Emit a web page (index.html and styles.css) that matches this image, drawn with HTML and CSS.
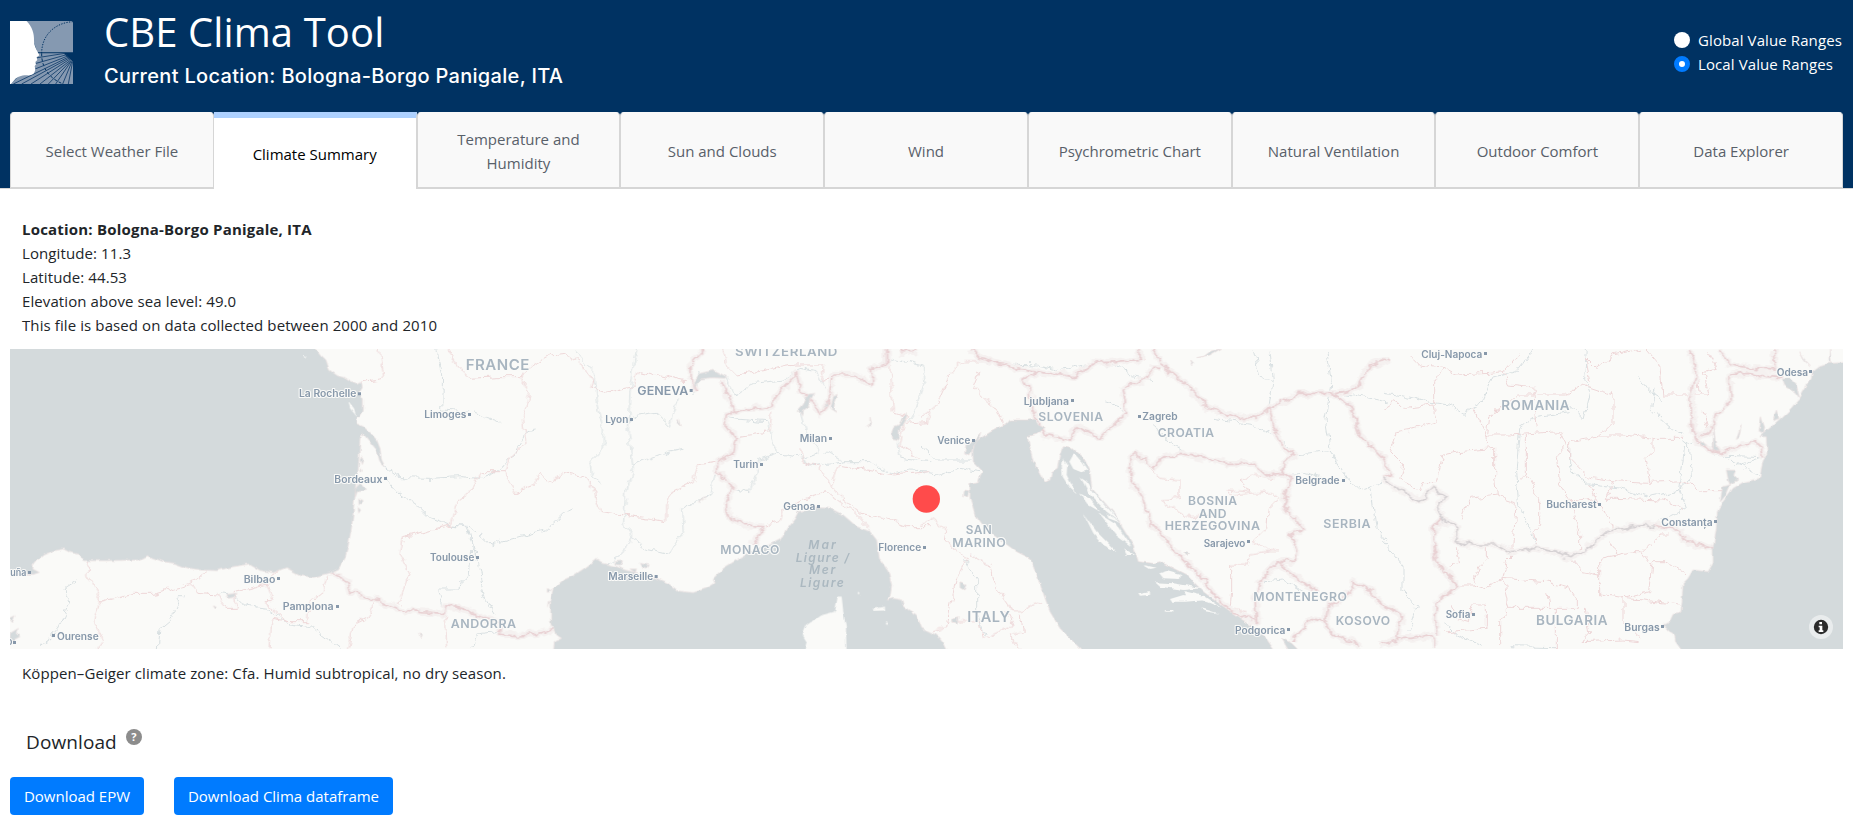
FILE: index.html
```html
<!DOCTYPE html>
<html lang="en">
<head>
<meta charset="utf-8">
<title>CBE Clima Tool</title>
<link rel="stylesheet" href="styles.css">
</head>
<body>
<header class="header">
  <div class="banner">
    <svg class="logo" viewBox="30 33 189 189">
      <path d="M80 33H219V127H112Z" fill="#8599b1"/>
      <path d="M110 130H190L219 155V222H32L60 195Z" fill="#8599b1"/>
      <path d="M219 35C165 38 125 75 125 130" class="logo-dots"/>
      <path d="M125 130C124 175 150 205 185 220" class="logo-dashes"/>
      <path d="M100 145L195 130M98 163L200 134M90 183L203 138M40 222L206 141M65 222L208 144M93 222L210 147M120 222L212 150M145 222L213 152M167 222L214 153M188 222L216 154M205 222L218 154" class="logo-rays"/>
      <path d="M30 33H80C96 50 103 70 102 92C102 110 114 125 118 136L110 142L112 150L106 156L108 163L104 169L106 178C104 193 96 197 80 196C62 196 52 202 46 207L33 222H30Z" fill="#fff"/>
    </svg>
    <div class="titles">
      <h1 class="title">CBE Clima Tool</h1>
      <h5 class="subtitle">Current Location: Bologna-Borgo Panigale, ITA</h5>
    </div>
    <div class="ranges">
      <label class="range"><span class="radio"></span><span>Global Value Ranges</span></label>
      <label class="range"><span class="radio radio-on"></span><span>Local Value Ranges</span></label>
    </div>
  </div>
  <nav class="tabs">
    <a class="tab">Select Weather File</a>
    <a class="tab tab-active">Climate Summary</a>
    <a class="tab">Temperature and Humidity</a>
    <a class="tab">Sun and Clouds</a>
    <a class="tab">Wind</a>
    <a class="tab">Psychrometric Chart</a>
    <a class="tab">Natural Ventilation</a>
    <a class="tab">Outdoor Comfort</a>
    <a class="tab">Data Explorer</a>
  </nav>
</header>
<main class="content">
  <div class="info">
    <b class="info-title">Location: Bologna-Borgo Panigale, ITA</b>
    <span>Longitude: 11.3</span>
    <span>Latitude: 44.53</span>
    <span>Elevation above sea level: 49.0</span>
    <span>This file is based on data collected between 2000 and 2010</span>
  </div>
  <svg class="map" viewBox="30 12 5499 900">
    <defs>
      <filter id="rough" filterUnits="userSpaceOnUse" x="0" y="0" width="5560" height="930">
        <feTurbulence type="fractalNoise" baseFrequency="0.035" numOctaves="3" seed="4" result="n"/>
        <feDisplacementMap in="SourceGraphic" in2="n" scale="26" xChannelSelector="R" yChannelSelector="G"/>
      </filter>
      <filter id="coast" filterUnits="userSpaceOnUse" x="0" y="0" width="5560" height="930">
        <feTurbulence type="fractalNoise" baseFrequency="0.04" numOctaves="2" seed="9" result="n"/>
        <feDisplacementMap in="SourceGraphic" in2="n" scale="12" xChannelSelector="R" yChannelSelector="G"/>
      </filter>
      <g id="borders">
        <path d="M990 683L1040 705L1050 740L1140 770L1200 795L1330 805L1335 785L1400 795L1450 820L1500 830L1500 865L1560 870L1620 865L1665 850"/>
        <path d="M2115 12L2070 60L2070 100L2085 130L2095 135M2165 110L2180 150L2205 200L2180 210L2175 240L2210 280L2200 330L2150 350L2150 380L2200 430L2180 470L2190 520L2240 540L2290 545L2260 600M2200 200L2260 190L2310 185L2340 140L2390 85L2400 140L2440 170L2460 210L2490 160L2500 90L2560 90L2615 120L2615 70L2660 60L2660 12M2700 20L2740 20L2750 12"/>
        <path d="M2915 12L2940 40L2990 55L3110 80L3220 95L3280 55L3350 50L3420 40L3420 12M3110 80L3070 105L3090 140L3100 200L3130 270L3210 285L3230 245L3300 280L3340 240L3380 210L3370 130L3440 100L3460 70L3480 70M3460 12L3480 55L3530 95L3590 150L3620 185L3700 215L3770 220L3810 190L3900 145L4010 145L4070 130L4110 60L4170 45M3810 190L3820 240L3850 310L3890 330L3850 350L3845 385L3875 395L3850 480L3910 555L3870 570L3895 620L3890 645L3835 650L3780 710L3765 760L3770 830L3700 800L3650 760L3590 680L3550 640L3500 590L3450 530L3430 460L3390 400L3390 340L3410 325L3460 370L3480 340L3540 325L3620 340L3680 355L3760 355L3800 390L3845 385M4000 145L4050 180L4080 270L4150 340L4170 390L4150 400M3835 650L3880 690L3950 740M3880 890L3930 820L3975 830L3980 790L4050 740L4060 710L4110 740L4150 780L4205 810L4190 880L4240 880L4290 870L4310 905M3975 830L4000 870L4060 890L4080 912M4190 885L4140 900"/>
        <path d="M5069 12L5090 80L5075 150L5080 260L5090 290L5160 325L5220 300L5270 290L5285 310L5290 340M5095 275L5130 260L5150 210L5190 170L5190 90L5240 85L5310 95L5350 100M5160 20L5190 60L5260 70L5325 75L5320 12M4960 540L5040 555L5060 590L5140 610M4330 520L4300 550L4310 650L4370 720L4310 775L4305 830L4310 870"/>
      </g>
      <path id="danube" d="M4150 400L4200 435L4260 470L4300 430L4340 455L4310 480L4335 530L4380 550L4360 590L4420 600L4490 600L4540 620L4600 610L4660 620L4710 635L4760 615L4820 560L4900 545L4960 540"/>
    </defs>
    <rect x="0" y="0" width="5560" height="930" class="land"/>

    <g class="rivers" filter="url(#rough)">
      <path d="M1310 12L1328 90L1325 195L1400 200M1155 365L1200 398L1290 400L1380 395L1440 400L1490 380L1540 330L1580 260L1610 255M1155 400L1200 450L1250 480L1285 515L1350 540L1395 545L1420 600L1410 690L1360 735L1315 735L1330 790M1350 540L1410 545L1470 600L1560 575L1640 555L1690 505L1725 495M1400 545L1430 640L1455 760L1485 810M120 905L165 870L210 770L195 730L235 705M475 910L480 850L510 825L540 755L560 755M650 745L700 750L730 780L800 790L870 840L940 850L1020 910M1415 910L1430 870L1510 860"/>
      <g transform="translate(1380)">
        <path d="M345 20L400 80L410 180L430 250L430 310L390 350L395 390L425 410M530 12L510 140L505 260L520 370L500 440L493 540L515 570L485 630L440 660M515 215L590 205L630 245L655 160M515 575L560 610L630 625L670 560L665 490L750 450L765 390M40 200L125 235M700 150L720 80M800 100L825 150L880 115L970 105L1020 70L1065 80L1095 130M790 215L830 222L920 230L950 325L1030 340L1080 320L1040 270L1020 200M950 328L900 345L870 440L820 430M1030 345L1060 365L1150 350L1230 350L1300 388L1350 375L1410 378M1270 60L1300 40L1390 60L1395 110L1370 190L1345 230M1315 290L1320 340L1410 350M1100 320L1140 345M520 360L620 320L670 310"/>
      </g>
      <g transform="translate(2760)">
        <path d="M0 300L50 345L155 345M0 380L50 390L120 370L180 380M200 55L350 60L430 75L520 55L590 60L640 95L700 110M1050 20L1060 100L1045 200L1080 280L1130 330L1230 320L1280 400L1320 435L1390 410M1080 390L1150 385L1210 400M1220 12L1235 120L1215 220L1230 310M1350 430L1365 550L1400 590M555 170L600 185L620 210M700 235L720 270L790 320L870 340M880 220L1000 240L1060 270M130 640L170 700L170 800L195 870M1035 710L1090 705L1150 740M1000 20L1020 100L1060 110M1240 140L1300 150L1400 170"/>
      </g>
      <g transform="translate(4149)">
        <path d="M0 145L60 152L130 170L200 180L240 205L300 170L330 100L400 80L440 30L450 12M610 12L605 100L620 140L600 220L560 180M560 200L460 215L410 250L400 370L410 480L460 600M560 310L560 370L620 420L720 430L800 455L890 435L905 300L930 290M890 430L910 490L860 515L820 530M895 290L920 310L925 400L890 430M1000 330L1140 335L1060 365M1010 330L1070 360L1130 395M820 130L805 190L850 240L900 270M0 590L60 660L60 740L105 790L80 860M185 830L220 870L300 905M770 100L800 140L840 165M380 905L520 908"/>
      </g>
    </g>

    <g class="regions" filter="url(#rough)">
      <path d="M1140 12L1152 100L1080 112M1345 12L1370 60L1395 90L1410 100L1490 95L1560 95L1600 60L1650 30L1700 25L1745 60L1780 110L1775 130L1830 140L1900 125L1915 80L1985 95L2060 110M1560 95L1590 150L1570 220L1580 290L1535 330L1520 380L1440 380L1410 440L1370 470L1350 540L1210 575L1200 630L1230 680L1195 780M1520 380L1540 440L1600 420L1620 385L1650 410L1690 385L1720 390L1760 400L1780 440L1800 500L1870 510L1950 520L2000 530L2000 480L2015 440L2080 410L2095 360L2150 350M265 650L260 690L300 750L300 770L280 830L310 880L290 910M300 770L400 745L460 745L570 715L620 680M570 715L590 745L650 750L680 790L710 790L700 740L800 715L830 680M800 715L820 770L795 770L860 830L930 830M810 910L815 820L870 830M980 690L970 740L930 770L925 830M1130 770L1100 820L1060 840L1045 910M1335 790L1340 910"/>
      <g transform="translate(1380)">
        <path d="M790 12L800 60L830 90L950 70L1000 60L1090 60L1085 110L1130 90M835 275L930 260L935 200M1020 310L1030 350L1080 370L1110 420L1120 440L1160 470L1200 505L1270 520L1340 545L1410 545M920 540L960 530L975 480L1040 460L1100 440L1180 500L1230 550M1110 420L1135 360L1300 390L1410 380M1290 60L1300 200L1340 215L1320 300L1380 340M1340 235L1400 230L1410 190"/>
      </g>
      <g transform="translate(2760)">
        <path d="M0 220L50 180L90 90L130 50L190 50M180 80L160 130L230 190L250 240M0 540L40 520L80 560L75 590L140 640L110 700L90 790L80 850L40 860M150 630L210 660L230 730L280 800L300 800L370 770M95 830L180 830L190 880L280 840L260 800M300 810L310 860L270 870L300 910M690 375L720 400L780 405L780 460L720 465L800 515L880 510M1060 400L1000 390L960 410L990 440L920 435L930 450L1050 440L1080 460L1045 490L1040 550L1000 590L1050 620L1080 620M1050 620L990 630L980 660L935 660L935 740L930 790L980 800M660 20L670 50"/>
      </g>
      <g transform="translate(4149)">
        <path d="M0 190L30 170L70 190L150 180L160 230L100 250L40 260L20 320L60 360L50 400L110 440L120 410L160 410L180 330L230 320L335 310L335 400L340 450L260 460L235 520M80 30L110 60L180 70L220 90L320 85L360 80L410 20M180 70L155 110L155 180M360 80L380 120L460 130L450 150L400 150L370 180L320 210L310 300M270 190L310 270L380 270L530 260L550 300L520 330L530 420L560 460L590 560L590 610M450 150L460 250M460 150L550 150L600 120L690 150L690 230L650 270L620 280L560 290L560 340L620 400L690 410L800 415L790 340L810 320L810 280L720 270L650 270M610 40L640 70L690 30L770 12M610 40L620 110M790 12L830 60L840 150L920 150L980 150L960 80L1000 70L980 20M810 280L900 280M430 270L430 390L470 460L470 540L450 560L460 600M430 390L410 400M340 450L400 470L390 600M620 420L640 460L570 470M690 410L670 460L700 460L840 465L880 480L900 500M640 460L690 540L690 550M800 415L900 410L960 440L1020 440M390 600L390 630L370 650L360 700L300 730L270 720M310 600L310 640L290 660L270 720L230 720M220 610L230 650L200 670M360 700L490 710L560 730L580 760L580 790L500 790L490 740M560 640L600 680L650 690L650 640L750 620L780 620L830 570L860 570M650 690L650 750L720 760L780 765L890 780M680 590L700 630M780 620L810 660L800 740L730 760M810 650L850 650L910 690M360 700L380 790L500 790M200 780L220 820L260 830L260 780L310 780L310 850L190 860M380 790L350 830L350 900M520 790L520 860L520 910M610 790L620 870L600 890L720 885L770 890M720 760L720 830L770 880M940 80L950 150M960 200L980 270"/>
      </g>
    </g>

    <g filter="url(#rough)">
      <g class="border-halo"><use href="#borders"/><use href="#danube"/></g>
      <use href="#borders" class="border-line"/>
      <use href="#danube" class="border-line danube"/>
    </g>

    <g filter="url(#coast)">
      <g class="water">
        <path d="M0 0H940L962 30L978 45L988 75L1012 92L1030 97L1055 112L1070 118L1082 112L1084 125L1075 140L1090 165L1090 195L1078 215L1068 215V235L1090 245L1110 262L1130 285L1140 310L1145 345L1155 365L1148 365L1138 345L1130 315L1105 285L1088 265L1080 280L1075 370L1070 420L1063 470L1056 540L1045 600L1035 640L1015 672L990 683L940 697L905 692L858 668L820 683L780 676L748 657L700 665L650 677L600 675L560 668L525 655L490 650L440 632L415 645L320 647L250 647L235 628L210 622L190 612L160 618L130 630L112 645L100 660L98 672L118 682L100 688L0 685Z"/>
        <path d="M1084 332L1089 345L1084 358L1080 345ZM1083 370L1087 377L1082 384ZM1080 415L1100 436L1072 440L1066 455L1066 430ZM1076 462L1087 467L1077 480ZM1074 488L1082 495L1076 504ZM30 820L45 812L38 830ZM30 865L55 850L48 865L60 875L30 890ZM680 748L708 745L702 756L685 760ZM640 783L652 786L646 792ZM1256 863L1264 870L1260 878Z"/>
        <g transform="translate(1380)">
          <path d="M280 930L283 890L305 880L290 870L285 850L272 835V770L280 730L310 705L340 692L370 672L410 642L430 655L470 665L495 675L540 685L590 700L625 715L655 738L700 743L740 730L765 715L760 700L790 670L830 645L880 615L930 598L965 580L985 545L1005 520L1015 500L1075 488L1110 490L1150 510L1190 545L1230 560L1250 585L1258 640L1285 680L1295 720L1290 755L1282 765L1300 760L1325 765L1330 785L1370 810L1385 850L1410 862Q1445 870 1460 912V930Z"/>
          <path d="M708 118L700 135L705 105L720 85L760 76L800 95L795 100L755 98L725 102ZM1015 195L1030 178L1045 148L1065 145L1050 162L1046 182L1028 196L1025 215ZM1120 155L1135 148L1124 175L1122 190L1132 203L1112 190ZM1338 202L1340 215L1318 255L1318 285L1298 280L1295 265L1302 245L1315 240ZM655 220L661 245L652 235ZM1230 215L1235 238L1218 243L1230 235ZM465 650L488 648L482 660L465 658ZM538 655L568 660L560 672L545 668ZM510 672H530L525 682ZM262 730L275 738L262 742ZM265 765L270 770L263 785ZM715 470L740 458L720 472ZM1105 180L1090 185L1104 170Z"/>
        </g>
        <g transform="translate(2760)">
          <path d="M262 235L270 225L325 225L345 222L355 240L375 250L350 268L322 275L330 310L340 350L375 412L390 405L395 380L412 370L418 335L430 305L455 310L490 340L510 380L515 430L560 480L600 525L605 545L640 600L655 650L700 655L720 650L760 670L800 690L850 740L890 770L960 820L1000 845L1040 880L1075 930H500L460 890L420 850L390 800L370 745L350 690L330 640L290 620L262 600L220 570L190 545L165 510L150 460V415L175 410L187 378L160 350L158 320L165 290L210 262Z"/>
          <path d="M165 285L185 262L182 272L160 305L150 333L133 325L138 300ZM130 438L147 440L143 455L128 452ZM120 713L138 720L132 735L120 728ZM98 820L114 815L112 835L98 830ZM850 35L870 20L905 10L870 30L830 38ZM812 45L822 55L818 62ZM792 622L806 625L800 633ZM1085 880L1115 895L1135 915H1105Z"/>
        </g>
        <g transform="translate(4149)">
          <path d="M1400 52L1340 55L1310 65L1290 80L1285 100L1250 160L1215 200L1165 245L1130 275L1150 275L1152 325L1140 345L1130 400L1080 412L1050 430L1020 470L1003 500L1000 550L990 610V655L975 680L930 675L915 700L900 715L897 770L893 805L870 808L860 830L840 840L860 860L875 870L878 890L905 930H1400Z"/>
          <path d="M1198 102L1220 100L1240 120L1250 160L1235 140L1205 122ZM1135 212L1145 245L1142 265L1128 258ZM1180 195L1188 220L1170 228ZM1030 375L1060 376L1055 395L1065 405L1040 418L1035 400ZM1018 425L1042 420L1030 450L1012 470ZM992 240L998 300L1010 315L990 318ZM955 285L970 302L955 305ZM1075 240L1068 275L1060 280ZM1250 20L1262 40L1285 65L1262 45ZM1340 12L1345 52L1338 45Z"/>
        </g>
      </g>
      <g class="land">
        <path d="M1045 168L1062 190L1068 212L1050 190ZM908 34L920 36L915 40Z"/>
        <path d="M2410 930L2420 890L2408 870L2420 840L2460 812L2505 800L2513 755L2525 755L2530 800L2538 850L2540 930ZM2618 792L2655 785V797L2620 798ZM2573 740L2580 745L2574 748ZM2658 830H2665V836H2658Z"/>
        <g transform="translate(2760)">
          <path d="M430 340L442 360L440 390L458 425L470 448L450 430L428 395L425 360ZM448 350L462 325L485 350L502 375L484 382L460 372ZM482 398L500 410L518 440L556 480L600 530L560 500L510 450ZM490 505L530 560L560 590L590 620L550 600L520 565ZM535 505L590 540L635 605L590 572L555 530ZM480 445L510 462L540 500L505 480ZM565 520L605 535L560 505ZM718 685L740 678L783 690L780 702L730 700ZM705 712L760 715L850 730L790 735L720 725ZM655 745L690 738V750L660 752ZM750 762L790 750L860 765L800 770L755 770ZM845 790L900 806L850 798ZM735 795H760V800H735ZM790 738L850 752L905 790L870 775L800 752ZM610 610L645 630L620 630ZM670 660L710 668L690 672Z"/>
        </g>
      </g>
    </g>

    <circle cx="2779" cy="462" r="41" class="marker"/>

    <g class="city">
      <path d="M1074 142h9v9h-9zM1152 396h9v9h-9zM84 678h9v9h-9zM831 696h9v9h-9zM1008 780h9v9h-9zM156 867h9v9h-9zM39 888h9v9h-9zM1404 204h9v9h-9zM1428 633h9v9h-9zM2069 132h9v9h-9zM1890 219h9v9h-9zM2487 276h9v9h-9zM2280 354h9v9h-9zM2451 480h9v9h-9zM1964 690h9v9h-9zM2769 603h9v9h-9zM3213 162h9v9h-9zM3414 210h9v9h-9zM2916 282h9v9h-9zM4026 402h9v9h-9zM3741 585h9v9h-9zM3861 849h9v9h-9zM4452 21h9v9h-9zM5427 75h9v9h-9zM4794 474h9v9h-9zM5142 525h9v9h-9zM4416 804h9v9h-9zM4983 840h9v9h-9z"/>
      <text x="897" y="156" textLength="172">La Rochelle</text>
      <text x="1003" y="413" textLength="144">Bordeaux</text>
      <text x="31" y="693" textLength="48">uña</text>
      <text x="731" y="713" textLength="95">Bilbao</text>
      <text x="848" y="796" textLength="153">Pamplona</text>
      <text x="171" y="884" textLength="125">Ourense</text>
      <text x="20" y="899" textLength="17">o</text>
      <text x="1273" y="220" textLength="126">Limoges</text>
      <text x="1290" y="648" textLength="133">Toulouse</text>
      <text x="1912" y="150" textLength="153" class="geneva">GENEVA</text>
      <text x="1816" y="235" textLength="69">Lyon</text>
      <text x="2399" y="291" textLength="82">Milan</text>
      <text x="2200" y="368" textLength="75">Turin</text>
      <text x="2350" y="496" textLength="96">Genoa</text>
      <text x="1825" y="705" textLength="135">Marseille</text>
      <text x="2635" y="617" textLength="129">Florence</text>
      <text x="3071" y="181" textLength="136">Ljubljana</text>
      <text x="3427" y="225" textLength="106">Zagreb</text>
      <text x="2812" y="297" textLength="99">Venice</text>
      <text x="3886" y="418" textLength="133">Belgrade</text>
      <text x="3611" y="605" textLength="125">Sarajevo</text>
      <text x="3705" y="866" textLength="151">Podgorica</text>
      <text x="4264" y="38" textLength="183">Cluj-Napoca</text>
      <text x="5330" y="92" textLength="94">Odesa</text>
      <text x="4639" y="490" textLength="151">Bucharest</text>
      <text x="4984" y="543" textLength="154">Constanța</text>
      <text x="4337" y="818" textLength="74">Sofia</text>
      <text x="4873" y="857" textLength="106">Burgas</text>
    </g>
    <g class="country">
      <text x="1397" y="74" textLength="193" class="large">FRANCE</text>
      <text x="2205" y="33" textLength="309">SWITZERLAND</text>
      <text x="2161" y="627" textLength="179">MONACO</text>
      <text x="1352" y="850" textLength="198">ANDORRA</text>
      <text x="3115" y="227" textLength="196">SLOVENIA</text>
      <text x="3473" y="276" textLength="171">CROATIA</text>
      <text x="3564" y="481" textLength="149">BOSNIA</text>
      <text x="3596" y="518" textLength="85">AND</text>
      <text x="3494" y="556" textLength="288">HERZEGOVINA</text>
      <text x="3970" y="548" textLength="143">SERBIA</text>
      <text x="2897" y="568" textLength="80">SAN</text>
      <text x="2857" y="605" textLength="162">MARINO</text>
      <text x="2902" y="832" textLength="129" class="large">ITALY</text>
      <text x="3760" y="768" textLength="282">MONTENEGRO</text>
      <text x="4007" y="841" textLength="165">KOSOVO</text>
      <text x="4504" y="194" textLength="206" class="medium">ROMANIA</text>
      <text x="4608" y="839" textLength="216" class="medium">BULGARIA</text>
    </g>
    <g class="sea">
      <text x="2425" y="612" textLength="82">Mar</text>
      <text x="2387" y="650" textLength="160">Ligure /</text>
      <text x="2427" y="687" textLength="79">Mer</text>
      <text x="2400" y="725" textLength="131">Ligure</text>
    </g>
    <circle cx="5463" cy="846" r="36" fill="#e9eced"/>
    <circle cx="5463" cy="846" r="21.5" fill="#2b2b2b"/>
    <path d="M5458 831h8v7h-8zM5456 842h11v14h3v5h-14v-5h3v-9h-3z" fill="#fff"/>
  </svg>
  <p class="zone">Köppen–Geiger climate zone: Cfa. Humid subtropical, no dry season.</p>
  <div class="download-head">
    <h5 class="download-title">Download</h5>
    <span class="help">?</span>
  </div>
  <div class="buttons">
    <button class="btn btn-epw">Download EPW</button>
    <button class="btn btn-clima">Download Clima dataframe</button>
  </div>
</main>
<script src="map.js"></script>
</body>
</html>
```

FILE: map.js
```js
// City and country names widen their glyphs to fill textLength; sea names only space out.
for (const label of document.querySelectorAll('.city text, .country text')) {
  label.setAttribute('lengthAdjust', 'spacingAndGlyphs');
}
```

FILE: styles.css
```css
* { box-sizing: border-box; }

body {
  margin: 0;
  background: #fff;
  color: #212529;
  font: 15px/24px "Open Sans", "Noto Sans", sans-serif;
  letter-spacing: 0.1px;
}

.header {
  height: 189px;
  padding: 0 10px;
  background: #003262;
  background-clip: padding-box;
  border-bottom: 1px solid #d6d6d6;
}

.banner {
  display: flex;
  height: 112px;
}

.logo {
  width: 63px;
  height: 63px;
  margin-top: 21px;
}

.logo-dots, .logo-dashes, .logo-rays {
  fill: none;
  stroke: #003262;
  stroke-width: 3;
}
.logo-dots { stroke-dasharray: 4 4; }
.logo-dashes { stroke-dasharray: 9 6; }
.logo-rays { stroke-width: 2.8; stroke: #1a4470; }

.titles {
  margin-left: 31px;
  color: #fff;
}

.title {
  margin: 8px 0 0;
  font-size: 40px;
  font-weight: 400;
  line-height: 48px;
}

.subtitle {
  margin: 8px 0 0;
  font: 500 20px/24px Inter, sans-serif;
  letter-spacing: 0.31px;
}

.ranges {
  width: 169px;
  margin: 28px 0 0 auto;
  color: #fff;
  font-weight: 500;
  white-space: nowrap;
}

.range {
  display: flex;
  align-items: center;
  gap: 8px;
  height: 24px;
}

.radio {
  width: 16px;
  height: 16px;
  border-radius: 50%;
  background: #fff;
}
.radio-on {
  border: 5px solid #007bff;
}

.tabs {
  display: flex;
  height: 77px;
}

.tab {
  display: flex;
  flex: 1 1 0;
  align-items: center;
  justify-content: center;
  padding: 1px 26px 0;
  text-align: center;
  letter-spacing: 0;
  color: #586069;
  background: #f9f9f9;
  border: 1px solid #d6d6d6;
  border-top-color: #f9f9f9;
  border-bottom-width: 2px;
  border-radius: 4px 4px 0 0;
}

.tab-active {
  padding-top: 0;
  color: #000;
  background: #fff;
  border-top: 6px solid #add1ff;
  border-bottom: 0;
  border-left: 0;
  border-radius: 0;
}

.content { padding: 0 10px; }

.info {
  display: flex;
  flex-direction: column;
  height: 160px;
  padding: 28px 12px 0;
}

.info-title { letter-spacing: 0.2px; }

.map {
  display: block;
  width: 1833px;
  height: 300px;
  font-family: Inter, "Noto Sans", sans-serif;
  letter-spacing: 0;
}

.land { fill: #fafaf8; }
.water { fill: #d4dadc; stroke: #ece0e0; stroke-width: 2; }
.rivers { fill: none; stroke: #d9e0e2; stroke-width: 3; }
.regions { fill: none; stroke: #eed7d8; stroke-width: 3; }
.border-halo { fill: none; stroke: #f5f1f0; stroke-width: 20; stroke-linejoin: round; }
.border-line { fill: none; stroke: #e9d2d4; stroke-width: 5; }
.danube { stroke: #d6d2d4; }
.marker { fill: #ff4b4b; }

.map text {
  paint-order: stroke;
  stroke: #fafaf8;
  stroke-width: 6px;
  stroke-linejoin: round;
}
.city { fill: #8798aa; font-size: 29px; font-weight: 600; }
.city .geneva { font-size: 34px; }
.country { fill: #a8b5c0; font-size: 36px; font-weight: 600; letter-spacing: 1.5px; }
.country .large { font-size: 43px; }
.country .medium { font-size: 39px; }
.map .sea text {
  fill: #abb8c0;
  stroke: none;
  font-size: 36px;
  font-style: italic;
  font-weight: 600;
}

.zone {
  margin: 0;
  padding: 12px 12px 0;
}

.download-head {
  display: flex;
  align-items: flex-start;
  height: 92px;
  padding: 45px 16px 0;
}

.download-title {
  margin: 0;
  font-size: 19px;
  font-weight: 500;
  line-height: 24px;
}

.help {
  width: 16px;
  height: 16px;
  margin: -1px 0 0 9px;
  border-radius: 50%;
  background: #8c8c8c;
  color: #fff;
  font-size: 11px;
  font-weight: 700;
  line-height: 16px;
  text-align: center;
}

.buttons {
  display: flex;
  gap: 30px;
}

.btn {
  height: 38px;
  padding: 0;
  border: 0;
  border-radius: 4px;
  background: #007bff;
  color: #fff;
  font: inherit;
  font-weight: 500;
}
.btn-epw { width: 134px; }
.btn-clima { width: 219px; }
```
